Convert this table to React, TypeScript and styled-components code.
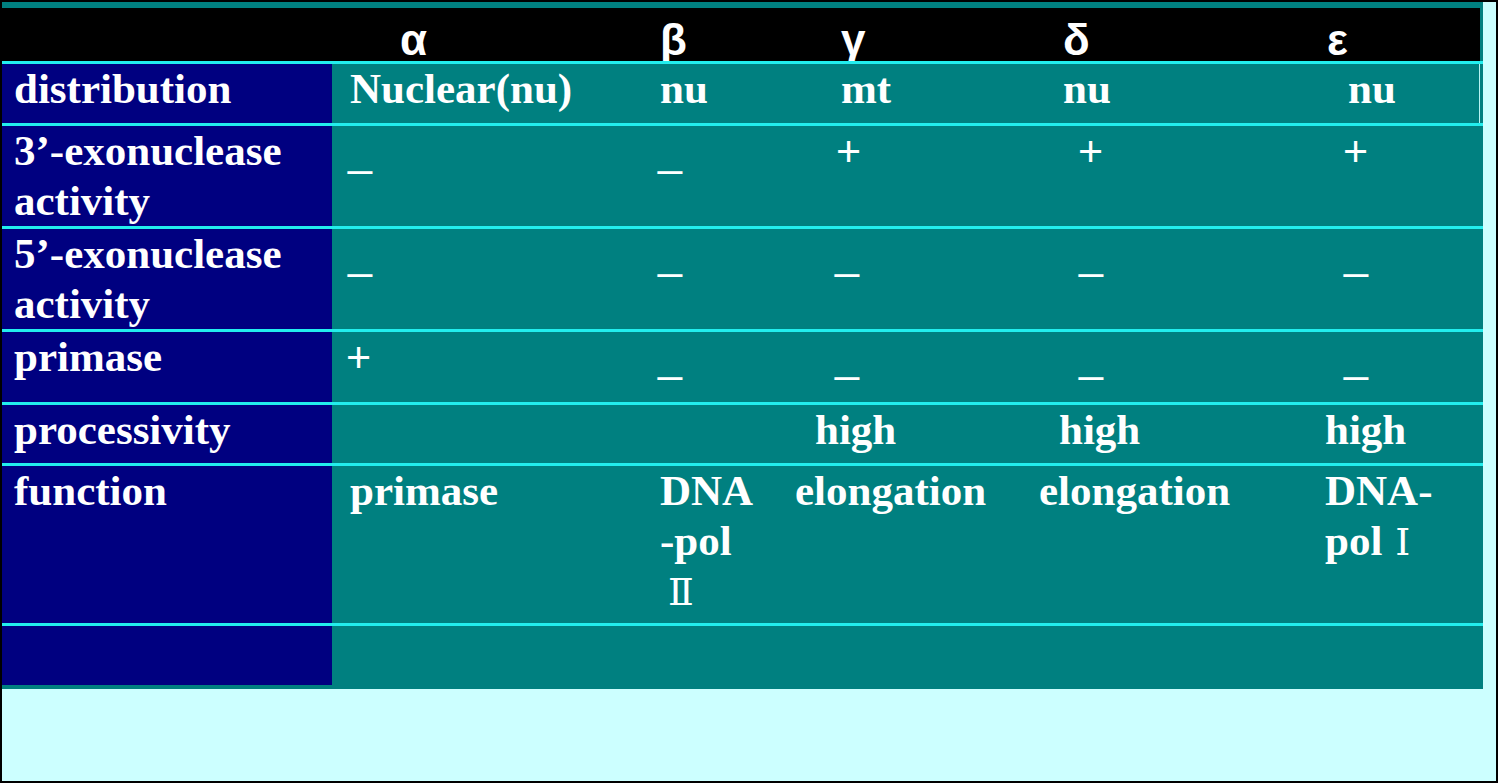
import React, { ReactNode } from "react";
import styled, { createGlobalStyle } from "styled-components";

const GlobalStyle = createGlobalStyle`
  html, body {
    margin: 0;
    padding: 0;
    background: #ccffff;
  }
`;

const COLUMNS = "330px 311px 132px 246px 286px 1fr";

type CellData = { content: ReactNode; indent: number };

interface IRow {
  label: ReactNode;
  height: number;
  cells: CellData[];
  edge?: boolean;
}

const Sign = styled.span`
  font-family: "Liberation Sans", Arial, sans-serif;
  font-weight: 400;
`;

const Numeral = styled.span<{ $lead?: number }>`
  font-family: "DejaVu Serif", "Liberation Serif", serif;
  font-weight: 400;
  font-size: 38px;
  margin-left: ${(p) => p.$lead ?? 0}px;
`;

const plus = (indent: number): CellData => ({ content: <Sign>+</Sign>, indent });
const minus = (indent: number): CellData => ({ content: <Sign>_</Sign>, indent });
const word = (content: ReactNode, indent: number): CellData => ({ content, indent });

const greek: CellData[] = [
  word("α", 68),
  word("β", 17),
  word("γ", 66),
  word("δ", 42),
  word("ε", 20),
];

const rows: IRow[] = [
  {
    label: "distribution",
    height: 59,
    edge: true,
    cells: [word("Nuclear(nu)", 18), word("nu", 17), word("mt", 66), word("nu", 42), word("nu", 41)],
  },
  {
    label: "3’-exonuclease activity",
    height: 100,
    cells: [minus(16), minus(15), plus(61), plus(57), plus(36)],
  },
  {
    label: "5’-exonuclease activity",
    height: 100,
    cells: [minus(16), minus(15), minus(60), minus(58), minus(37)],
  },
  {
    label: "primase",
    height: 70,
    cells: [plus(14), minus(15), minus(60), minus(58), minus(37)],
  },
  {
    label: "processivity",
    height: 58,
    cells: [word("", 18), word("", 17), word("high", 40), word("high", 38), word("high", 18)],
  },
  {
    label: "function",
    height: 157,
    cells: [
      word("primase", 18),
      word(
        <>
          DNA
          <br />
          -pol
          <br />
          <Numeral $lead={8}>Ⅱ</Numeral>
        </>,
        17
      ),
      word("elongation", 20),
      word("elongation", 18),
      word(
        <>
          DNA-
          <br />
          pol <Numeral $lead={2}>Ⅰ</Numeral>
        </>,
        18
      ),
    ],
  },
  {
    label: "",
    height: 59,
    cells: [word("", 0), word("", 0), word("", 0), word("", 0), word("", 0)],
  },
];

export default function App() {
  return (
    <>
      <GlobalStyle />
      <App.Frame>
        <App.Table>
          <App.Header>
            <App.HeaderCell $indent={0} />
            {greek.map((g, i) => (
              <App.HeaderCell key={i} $indent={g.indent}>
                {g.content}
              </App.HeaderCell>
            ))}
          </App.Header>

          {rows.map((row, r) => (
            <App.Row key={r} $height={row.height} $edge={row.edge}>
              <App.Label>{row.label}</App.Label>
              {row.cells.map((cell, c) => (
                <App.Cell key={c} $indent={cell.indent}>
                  {cell.content}
                </App.Cell>
              ))}
            </App.Row>
          ))}
        </App.Table>
      </App.Frame>
    </>
  );
}

App.Frame = styled.div`
  box-sizing: border-box;
  width: 1498px;
  height: 783px;
  border: 2px solid #000;
  background: #ccffff;
  overflow: hidden;
`;

App.Table = styled.div`
  width: 1481px;
  background: #008080;
  padding: 6px 0 4px;
  display: flex;
  flex-direction: column;
`;

App.Header = styled.div`
  display: grid;
  grid-template-columns: ${COLUMNS};
  height: 53px;
  margin-right: 3px;
  background: #000;
`;

App.HeaderCell = styled.div<{ $indent: number }>`
  padding: 8px 0 0 ${(p) => p.$indent}px;
  font-family: "Liberation Sans", Arial, sans-serif;
  font-weight: 700;
  font-size: 44px;
  line-height: 48px;
  color: #fff;
  white-space: nowrap;
`;

App.Row = styled.div<{ $height: number; $edge?: boolean }>`
  display: grid;
  grid-template-columns: ${COLUMNS};
  height: ${(p) => p.$height}px;
  border-top: 3px solid #22eeee;
  background: #008080;
  box-shadow: ${(p) =>
    p.$edge ? "inset -3px 0 0 #008080, inset -4px 0 0 #b8f2f2" : "none"};
  font-family: "Liberation Serif", "Times New Roman", serif;
  font-weight: 700;
  font-size: 43px;
  line-height: 50px;
  color: #fff;
`;

App.Label = styled.div`
  background: #000080;
  padding-left: 12px;
  padding-right: 8px;
`;

App.Cell = styled.div<{ $indent: number }>`
  padding-left: ${(p) => p.$indent}px;
  white-space: nowrap;
`;
